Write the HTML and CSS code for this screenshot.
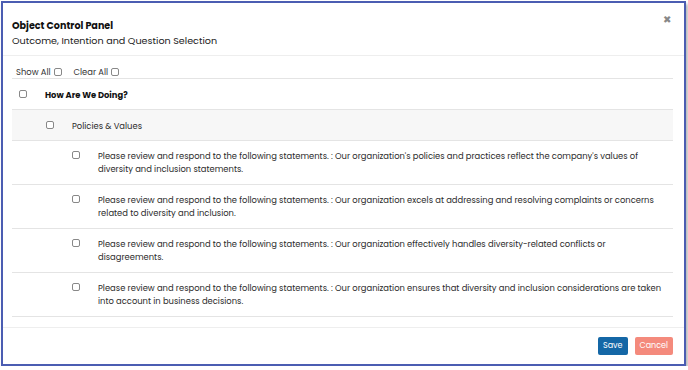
FILE: index.html
```html
<!DOCTYPE html>
<html lang="en">
<head>
  <meta charset="UTF-8">
  <title>Object Control Panel</title>
  <link rel="stylesheet" href="styles.css">
</head>
<body>
<div class="modal">
  <div class="modal-header">
    <div class="title">Object Control Panel</div>
    <div class="subtitle">Outcome, Intention and Question Selection</div>
    <span class="close">&#10006;</span>
  </div>
  <div class="modal-body">
    <div class="toolbar">
      <label>Show All <input type="checkbox"></label>
      <label>Clear All <input type="checkbox"></label>
    </div>
    <div class="row level-0">
      <input type="checkbox">
      <span class="text bold">How Are We Doing?</span>
    </div>
    <div class="row level-1 shaded">
      <input type="checkbox">
      <span class="text">Policies &amp; Values</span>
    </div>
    <div class="row level-2">
      <input type="checkbox">
      <span class="text">Please review and respond to the following statements. : Our organization's policies and practices reflect the company's values of diversity and inclusion statements.</span>
    </div>
    <div class="row level-2">
      <input type="checkbox">
      <span class="text">Please review and respond to the following statements. : Our organization excels at addressing and resolving complaints or concerns related to diversity and inclusion.</span>
    </div>
    <div class="row level-2">
      <input type="checkbox">
      <span class="text">Please review and respond to the following statements. : Our organization effectively handles diversity-related conflicts or disagreements.</span>
    </div>
    <div class="row level-2">
      <input type="checkbox">
      <span class="text">Please review and respond to the following statements. : Our organization ensures that diversity and inclusion considerations are taken into account in business decisions.</span>
    </div>
  </div>
  <div class="modal-footer">
    <button class="btn save">Save</button>
    <button class="btn cancel">Cancel</button>
  </div>
</div>
</body>
</html>
```

FILE: styles.css
```css
body {
  margin: 0;
  background: #fff;
  font-family: Poppins, "Open Sans", sans-serif;
  color: #222;
}
.modal {
  position: relative;
  margin: 1px 0 0 1px;
  width: 681px;
  height: 361px;
  border: 2px solid #4b5db2;
  box-shadow: 2px 3px 3px rgba(0,0,0,0.3);
  display: flex;
  flex-direction: column;
  background: #fff;
}
.modal-header {
  position: relative;
  padding: 16px 12px 7px 9px;
  border-bottom: 1px solid #eee;
}
.title {
  font-size: 9.6px;
  font-weight: 700;
  line-height: 14px;
  color: #111;
}
.subtitle {
  font-size: 9.6px;
  line-height: 15px;
  color: #222;
}
.close {
  position: absolute;
  top: 9px;
  right: 13px;
  font-size: 10px;
  color: #888;
}
.modal-body {
  flex: 1;
  padding: 0 11px 0 9px;
  border-bottom: 1px solid #eee;
}
.toolbar {
  display: flex;
  gap: 12px;
  padding: 10px 0 0 4px;
  height: 12px;
  font-size: 8.4px;
  line-height: 12px;
  color: #333;
  border-bottom: 1px solid #e4e4e4;
}
.toolbar label {
  display: flex;
  align-items: center;
  gap: 3px;
}
input[type=checkbox] {
  appearance: none;
  margin: 0;
  width: 8px;
  height: 8px;
  border: 1px solid #888;
  border-radius: 2px;
  background: #fff;
  flex: none;
}
.row {
  display: flex;
  align-items: flex-start;
  gap: 18px;
  border-bottom: 1px solid #e4e4e4;
  font-size: 8.4px;
  line-height: 13px;
  color: #2b2b2b;
}
.row input {
  margin-top: 1px;
}
.level-0 {
  padding: 10px 6px 7px 7px;
}
.level-1 {
  padding: 10px 6px 7px 34px;
}
.level-2 {
  padding: 9px 6px 8px 60px;
}
.shaded {
  background: #f7f7f7;
}
.bold {
  font-weight: 700;
  color: #111;
}
.modal-footer {
  display: flex;
  justify-content: flex-end;
  gap: 7px;
  padding: 9px 11px 9px;
}
.btn {
  border: none;
  border-radius: 2px;
  color: #fff;
  font-family: inherit;
  font-size: 8px;
  height: 18px;
  padding: 0 5px;
}
.save {
  background: #1467a6;
}
.cancel {
  background: #f48a7c;
}
```
